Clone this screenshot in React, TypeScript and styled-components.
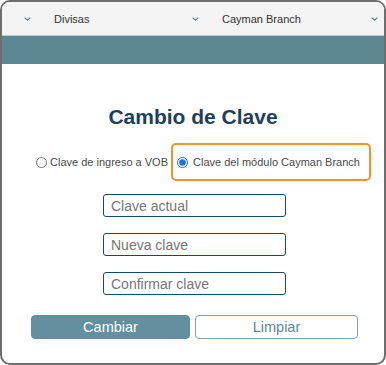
import React from "react";
import styled, { createGlobalStyle } from "styled-components";

const GlobalStyle = createGlobalStyle`
  body {
    margin: 0;
    background: #fff;
    font-family: "Liberation Sans", Arial, sans-serif;
  }
`;

const Frame = styled.div`
  width: 386px;
  height: 365px;
  box-sizing: border-box;
  border: 2px solid #6e6e6e;
  border-radius: 10px;
  overflow: hidden;
  background: #fff;
  display: flex;
  flex-direction: column;
`;

const Header = styled.div`
  height: 33px;
  flex: none;
  background: #f4f4f4;
  border-bottom: 1px solid #b8c9ce;
  display: flex;
  align-items: center;
  padding: 0 6px 0 22px;
`;

const NavItem = styled.div<{ $width?: number }>`
  display: flex;
  align-items: center;
  justify-content: space-between;
  padding-left: 23px;
  box-sizing: border-box;
  ${(p) => (p.$width ? `width: ${p.$width}px;` : "flex: 1;")}
  font-size: 11px;
  color: #333;
`;

const Band = styled.div`
  height: 28px;
  flex: none;
  background: #5e8794;
`;

const Content = styled.div`
  display: flex;
  flex-direction: column;
  padding-top: 41px;
`;

const Title = styled.h1`
  margin: 0;
  text-align: center;
  font-size: 21px;
  line-height: 24px;
  font-weight: bold;
  color: #1e3f5c;
`;

const RadioRow = styled.div`
  display: flex;
  align-items: center;
  margin-top: 14px;
  padding-left: 34px;
  height: 38px;
`;

const RadioLabel = styled.label<{ $highlight?: boolean }>`
  display: flex;
  align-items: center;
  gap: ${(p) => (p.$highlight ? 5 : 3)}px;
  font-size: 11px;
  color: #4a4a4a;
  white-space: nowrap;
  ${(p) =>
    p.$highlight &&
    `
    margin-left: 3px;
    height: 38px;
    box-sizing: border-box;
    border: 2px solid #f39325;
    border-radius: 5px;
    padding: 0 9px 0 4px;
  `}
`;

const Radio = styled.input`
  width: 11px;
  height: 11px;
  margin: 0;
  accent-color: #1a73e8;
`;

const Fields = styled.div`
  display: flex;
  flex-direction: column;
  gap: 16px;
  margin-top: 13px;
  padding-left: 101px;
`;

const Field = styled.input`
  width: 183px;
  height: 23px;
  box-sizing: border-box;
  border: 1px solid #1f4763;
  border-radius: 3px;
  padding: 0 7px;
  font-family: "Liberation Sans", Arial, sans-serif;
  font-size: 14px;
  color: #333;
  outline: none;

  &::placeholder {
    color: #767676;
  }
`;

const ButtonRow = styled.div`
  display: flex;
  gap: 5px;
  margin-top: 20px;
  padding-left: 29px;
`;

const Button = styled.button<{ $primary?: boolean; $width: number }>`
  width: ${(p) => p.$width}px;
  height: 24px;
  box-sizing: border-box;
  border-radius: 4px;
  font-family: "Liberation Sans", Arial, sans-serif;
  font-size: 14.5px;
  padding: 0;
  border: 1px solid ${(p) => (p.$primary ? "#638f9e" : "#7fa3b0")};
  background: ${(p) => (p.$primary ? "#638f9e" : "#fff")};
  color: ${(p) => (p.$primary ? "#fff" : "#5d8696")};
`;

const Chevron = () => (
  <svg width="7" height="4" viewBox="0 0 7 4">
    <path d="M0.6 0.6 L3.5 3.2 L6.4 0.6" fill="none" stroke="#6b7e8a" strokeWidth="1.2" />
  </svg>
);

const App = () => {
  return (
    <>
      <GlobalStyle />
      <Frame>
        <Header>
          <Chevron />
          <NavItem $width={168}>
            <span>Divisas</span>
            <Chevron />
          </NavItem>
          <NavItem>
            <span>Cayman Branch</span>
            <Chevron />
          </NavItem>
        </Header>
        <Band />
        <Content>
          <Title>Cambio de Clave</Title>
          <RadioRow>
            <RadioLabel>
              <Radio type="radio" name="tipo" readOnly />
              Clave de ingreso a VOB
            </RadioLabel>
            <RadioLabel $highlight>
              <Radio type="radio" name="tipo" defaultChecked />
              Clave del módulo Cayman Branch
            </RadioLabel>
          </RadioRow>
          <Fields>
            <Field type="password" placeholder="Clave actual" />
            <Field type="password" placeholder="Nueva clave" />
            <Field type="password" placeholder="Confirmar clave" />
          </Fields>
          <ButtonRow>
            <Button $primary $width={159}>Cambiar</Button>
            <Button $width={163}>Limpiar</Button>
          </ButtonRow>
        </Content>
      </Frame>
    </>
  );
};

export default App;
